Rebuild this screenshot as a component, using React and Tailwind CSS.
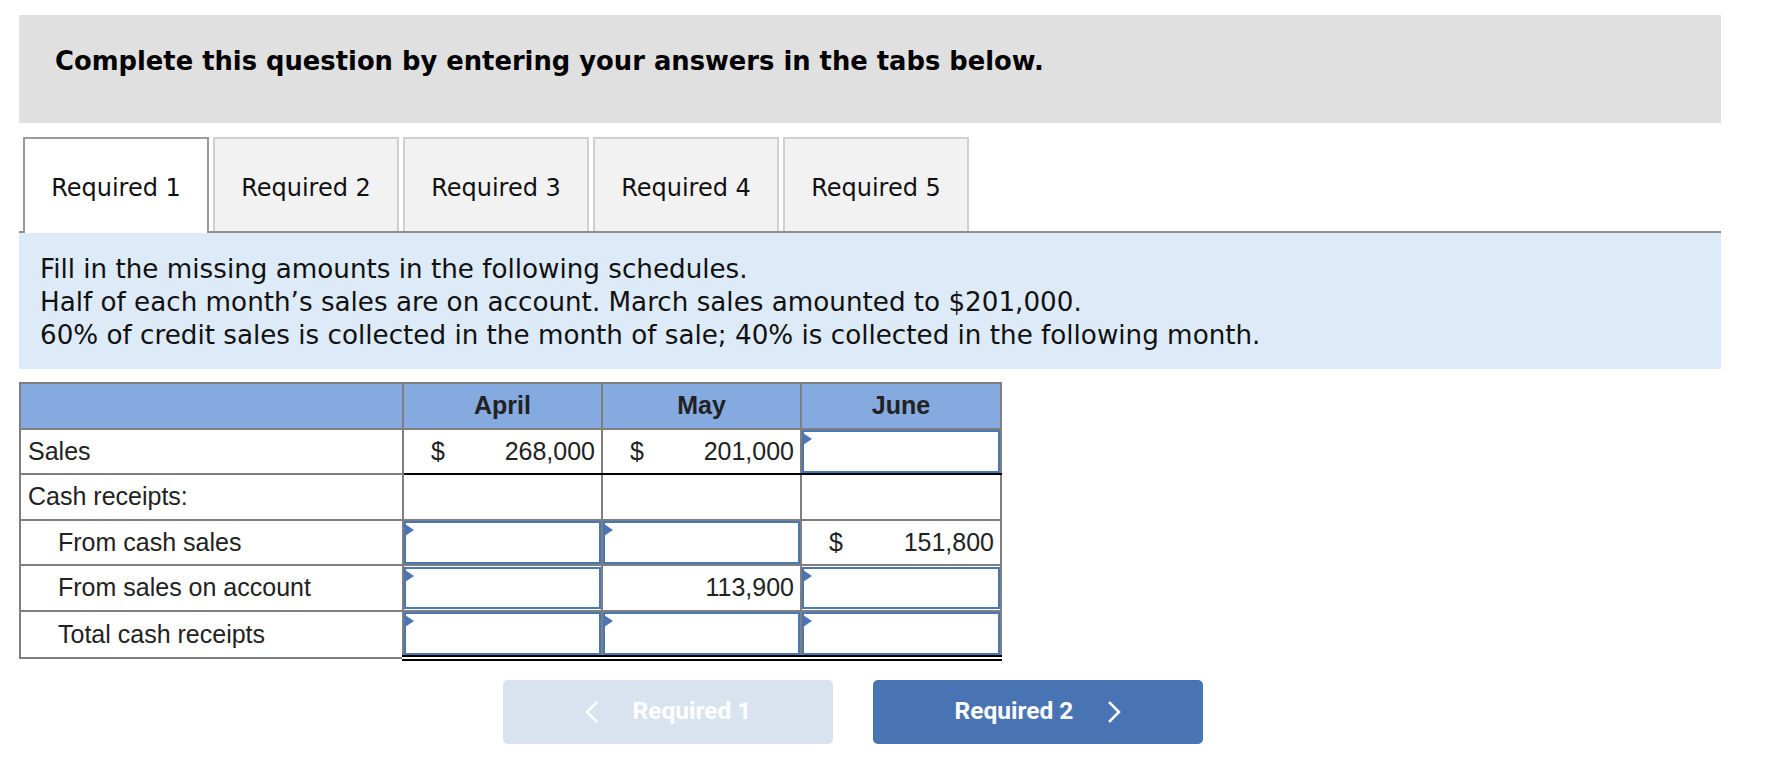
import React from "react";

const dv = { fontFamily: '"DejaVu Sans", Verdana, sans-serif' };
const ar = { fontFamily: '"Liberation Sans", Arial, sans-serif' };
const rb = { fontFamily: 'Roboto, "Liberation Sans", sans-serif' };

function Input() {
  return (
    <div className="relative h-[42.6px] border-2 border-[#4a76b5] bg-white">
      <div className="absolute left-[-1px] top-[1px] h-0 w-0 border-y-[6px] border-l-[9px] border-y-transparent border-l-[#4a76b5]" />
    </div>
  );
}

function Money({ value, dollar }) {
  return (
    <div className="flex h-[42.6px] items-center justify-between pl-[27px] pr-[6px]">
      <span>{dollar ? "$" : ""}</span>
      <span>{value}</span>
    </div>
  );
}

export default function App() {
  const tabs = ["Required 1", "Required 2", "Required 3", "Required 4", "Required 5"];
  const g = "border-2 border-[#7f7f7f]";
  const dbl = "border-2 border-b-[6px] border-[#7f7f7f] border-b-black border-double p-0";
  return (
    <div className="min-h-[780px] w-[1767px] bg-white pl-[19px] pt-[15px] text-[#111]">
      <div className="w-[1702px]">
        <div className="h-[108px] bg-[#e0e0e0] pl-[36px] pt-[31px]">
          <div className="text-[25.8px] font-bold leading-[30px] text-black" style={dv}>
            Complete this question by entering your answers in the tabs below.
          </div>
        </div>

        <div className="mt-[14px] flex items-end gap-[4px] border-b-2 border-[#8f8f8f] pl-[4px]" style={dv}>
          {tabs.map((t, i) =>
            i === 0 ? (
              <div
                key={t}
                className="-mb-[2px] flex h-[96px] w-[186px] items-center justify-center border-2 border-b-0 border-[#999999] bg-white pt-[4px] text-[24px] text-[#111]"
              >
                {t}
              </div>
            ) : (
              <div
                key={t}
                className="flex h-[94px] w-[186px] items-center justify-center border-2 border-b-0 border-[#cfcfcf] bg-[#f2f2f2] pt-[6px] text-[24px] text-[#111]"
              >
                {t}
              </div>
            )
          )}
        </div>

        <div className="bg-[#ddeaf7] pb-[17px] pl-[21px] pt-[20px] text-[26.2px] leading-[33px]" style={dv}>
          <div>Fill in the missing amounts in the following schedules.</div>
          <div>Half of each month’s sales are on account. March sales amounted to $201,000.</div>
          <div>60% of credit sales is collected in the month of sale; 40% is collected in the following month.</div>
        </div>

        <table className="mt-[13px] w-[981px] table-fixed border-collapse text-[25px] text-[#222]" style={ar}>
          <colgroup>
            <col className="w-[383px]" />
            <col className="w-[199px]" />
            <col className="w-[199px]" />
            <col className="w-[200px]" />
          </colgroup>
          <thead>
            <tr className="h-[45.6px] bg-[#84aadf]">
              <th className={g}></th>
              <th className={`${g} font-bold`}>April</th>
              <th className={`${g} font-bold`}>May</th>
              <th className={`${g} font-bold`}>June</th>
            </tr>
          </thead>
          <tbody>
            <tr className="h-[45.6px]">
              <td className={`${g} pl-[7px] text-left`}>Sales</td>
              <td className={`${g} border-b-black p-0`}>
                <Money dollar value="268,000" />
              </td>
              <td className={`${g} border-b-black p-0`}>
                <Money dollar value="201,000" />
              </td>
              <td className={`${g} border-b-black p-0`}>
                <Input />
              </td>
            </tr>
            <tr className="h-[45.6px]">
              <td className={`${g} pl-[7px] text-left`}>Cash receipts:</td>
              <td className={g}></td>
              <td className={g}></td>
              <td className={g}></td>
            </tr>
            <tr className="h-[45.6px]">
              <td className={`${g} pl-[37px] text-left`}>From cash sales</td>
              <td className={`${g} p-0`}>
                <Input />
              </td>
              <td className={`${g} p-0`}>
                <Input />
              </td>
              <td className={`${g} p-0`}>
                <Money dollar value="151,800" />
              </td>
            </tr>
            <tr className="h-[45.6px]">
              <td className={`${g} pl-[37px] text-left`}>From sales on account</td>
              <td className={`${g} border-b-black p-0`}>
                <Input />
              </td>
              <td className={`${g} border-b-black p-0`}>
                <Money value="113,900" />
              </td>
              <td className={`${g} border-b-black p-0`}>
                <Input />
              </td>
            </tr>
            <tr className="h-[45.6px]">
              <td className={`${g} pl-[37px] text-left`}>Total cash receipts</td>
              <td className={dbl}>
                <Input />
              </td>
              <td className={dbl}>
                <Input />
              </td>
              <td className={dbl}>
                <Input />
              </td>
            </tr>
          </tbody>
        </table>

        <div className="ml-[484px] mt-[19px] flex gap-[40px]" style={rb}>
          <div className="flex h-[64px] w-[330px] items-center justify-center gap-[34px] rounded-[5px] bg-[#d9e3ef] text-[24.5px] font-bold text-white">
            <svg width="14" height="22" viewBox="0 0 14 22" fill="none">
              <polyline points="12,1 2,11 12,21" stroke="white" strokeWidth="2.5" />
            </svg>
            <span>Required 1</span>
          </div>
          <div className="flex h-[64px] w-[330px] items-center justify-center gap-[34px] rounded-[5px] bg-[#4874b3] text-[24.5px] font-bold text-white">
            <span>Required 2</span>
            <svg width="14" height="22" viewBox="0 0 14 22" fill="none">
              <polyline points="2,1 12,11 2,21" stroke="white" strokeWidth="2.5" />
            </svg>
          </div>
        </div>
      </div>
    </div>
  );
}
